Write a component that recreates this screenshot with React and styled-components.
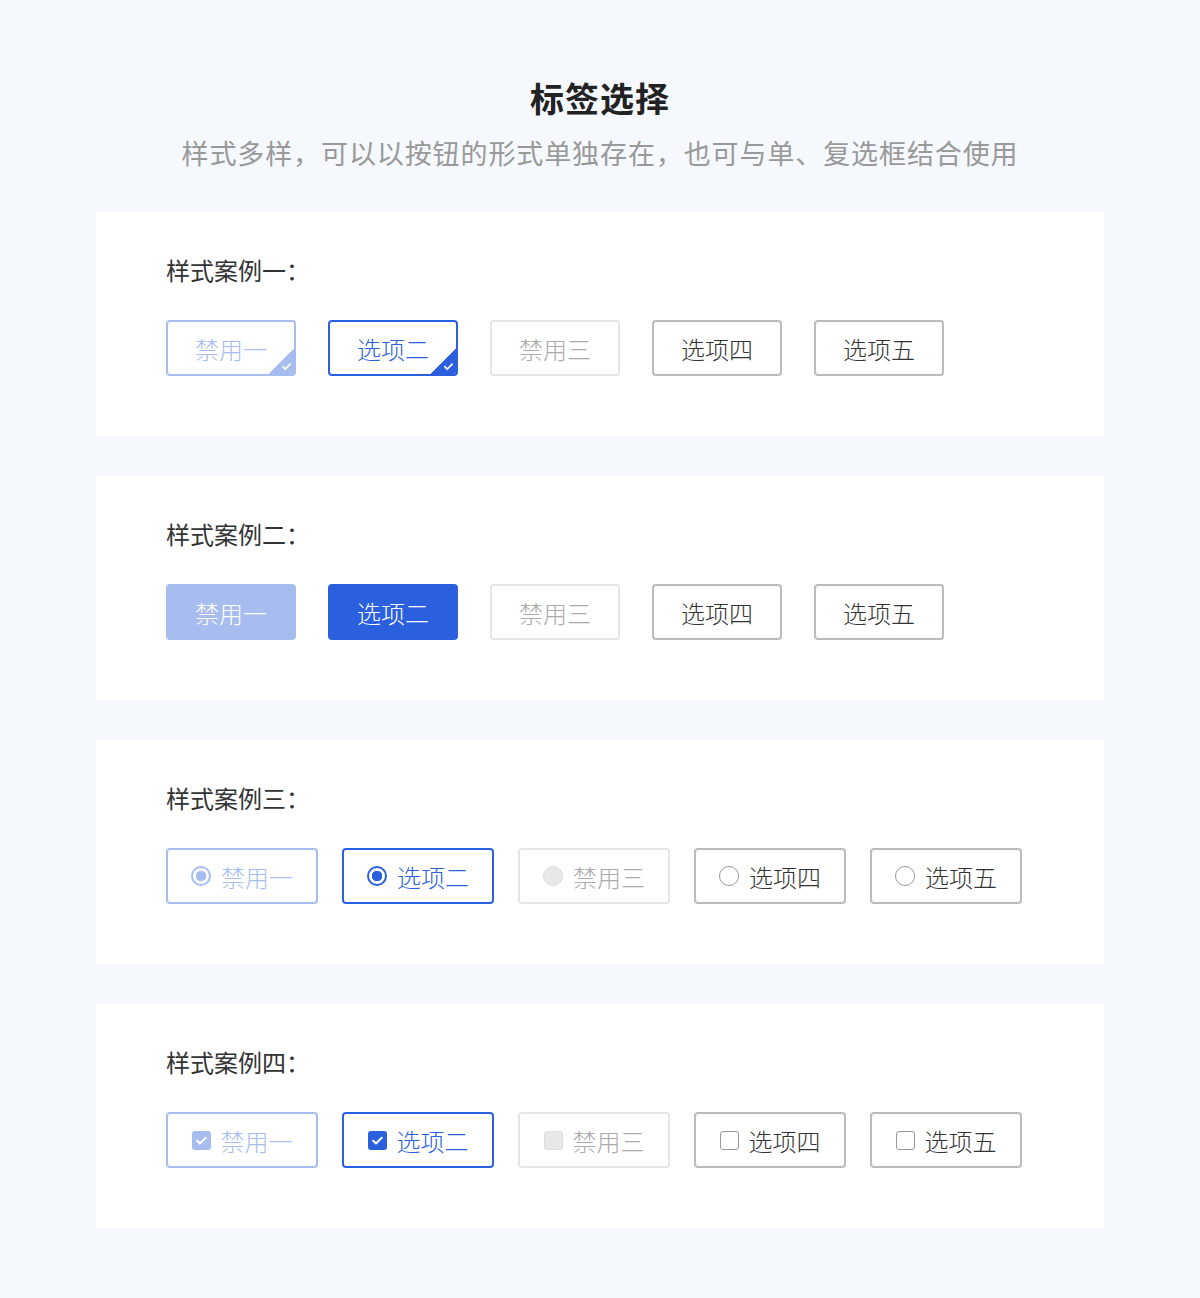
import React from 'react'
import styled, { createGlobalStyle, css } from 'styled-components'

const GlobalStyle = createGlobalStyle`
  body {
    margin: 0;
    background: #f5f8fc;
    font-family: "Noto Sans CJK SC", "Noto Sans", sans-serif;
  }
`

const BLUE = '#2a5fde'
const BLUE_LIGHT = '#a7bdf0'

const Page = styled.div`
  width: 1200px;
  min-height: 1298px;
  box-sizing: border-box;
  padding: 74px 96px 70px;
  display: flex;
  flex-direction: column;
  align-items: center;
`

const Title = styled.h1`
  margin: 0;
  font-size: 34px;
  line-height: 48px;
  font-weight: 700;
  color: #222;
  letter-spacing: 1px;
`

const Subtitle = styled.p`
  margin: 11px 0 39px;
  font-size: 27px;
  line-height: 40px;
  color: #999;
  letter-spacing: 0.9px;
`

const Card = styled.section`
  width: 100%;
  box-sizing: border-box;
  background: #fff;
  padding: 42px 70px 60px;
  margin-bottom: 40px;
`

const Label = styled.div`
  font-size: 24px;
  line-height: 32px;
  color: #333;
  margin-bottom: 34px;
`

const Row = styled.div`
  display: flex;
  gap: ${p => p.$gap}px;
`

const variants = {
  disabledOn: css`
    border-color: ${BLUE_LIGHT};
    color: ${BLUE_LIGHT};
  `,
  on: css`
    border-color: ${BLUE};
    color: ${BLUE};
  `,
  disabled: css`
    border-color: #e6e6e6;
    color: #aaa;
  `,
  off: css`
    border-color: #bbb;
    color: #333;
  `,
}

const filled = {
  disabledOn: css`
    background: ${BLUE_LIGHT};
    border-color: ${BLUE_LIGHT};
    color: #fff;
  `,
  on: css`
    background: ${BLUE};
    border-color: ${BLUE};
    color: #fff;
  `,
}

const Tag = styled.div`
  position: relative;
  overflow: hidden;
  box-sizing: border-box;
  width: ${p => p.$width}px;
  height: 56px;
  border: 2px solid;
  border-radius: 4px;
  display: flex;
  align-items: center;
  justify-content: center;
  gap: 10px;
  font-size: 24px;
  font-weight: 300;
  background: #fff;
  ${p => variants[p.$state]}
  ${p => p.$filled && filled[p.$state]}
`

const Corner = styled.span`
  position: absolute;
  right: -1px;
  bottom: -1px;
  width: 28px;
  height: 28px;
  background: linear-gradient(135deg, transparent 50%, ${p => p.$color} 50%);

  svg {
    position: absolute;
    right: 3px;
    bottom: 3px;
  }
`

const RadioDot = styled.span`
  box-sizing: border-box;
  width: 20px;
  height: 20px;
  border-radius: 50%;
  flex-shrink: 0;
  ${p => p.$state === 'on' && css`border: 2px solid ${BLUE}; background: radial-gradient(circle, ${BLUE} 0 5px, #fff 5.5px);`}
  ${p => p.$state === 'disabledOn' && css`border: 2px solid ${BLUE_LIGHT}; background: radial-gradient(circle, ${BLUE_LIGHT} 0 5px, #fff 5.5px);`}
  ${p => p.$state === 'disabled' && css`border: 1px solid #ddd; background: #e8e8e8;`}
  ${p => p.$state === 'off' && css`border: 1px solid #999; background: #fff;`}
`

const CheckBox = styled.span`
  box-sizing: border-box;
  width: 19px;
  height: 19px;
  border-radius: 3px;
  flex-shrink: 0;
  display: flex;
  align-items: center;
  justify-content: center;
  ${p => p.$state === 'on' && css`background: ${BLUE};`}
  ${p => p.$state === 'disabledOn' && css`background: ${BLUE_LIGHT};`}
  ${p => p.$state === 'disabled' && css`border: 1px solid #ddd; background: #e8e8e8;`}
  ${p => p.$state === 'off' && css`border: 1px solid #999; background: #fff;`}
`

const Tick = ({ size = 12 }) => (
  <svg width={size} height={size} viewBox="0 0 12 12" fill="none">
    <path d="M2 6.2l2.6 2.6L10 3.4" stroke="#fff" strokeWidth="1.8" strokeLinecap="round" strokeLinejoin="round" />
  </svg>
)

const options = [
  { text: '禁用一', state: 'disabledOn' },
  { text: '选项二', state: 'on' },
  { text: '禁用三', state: 'disabled' },
  { text: '选项四', state: 'off' },
  { text: '选项五', state: 'off' },
]

const cornerColor = { disabledOn: BLUE_LIGHT, on: BLUE }

const App = () => (
  <>
    <GlobalStyle />
    <Page>
      <Title>标签选择</Title>
      <Subtitle>样式多样，可以以按钮的形式单独存在，也可与单、复选框结合使用</Subtitle>

      <Card>
        <Label>样式案例一：</Label>
        <Row $gap={32}>
          {options.map(o => (
            <Tag key={o.text} $width={130} $state={o.state}>
              {o.text}
              {cornerColor[o.state] && (
                <Corner $color={cornerColor[o.state]}><Tick size={11} /></Corner>
              )}
            </Tag>
          ))}
        </Row>
      </Card>

      <Card>
        <Label>样式案例二：</Label>
        <Row $gap={32}>
          {options.map(o => (
            <Tag key={o.text} $width={130} $state={o.state} $filled>
              {o.text}
            </Tag>
          ))}
        </Row>
      </Card>

      <Card>
        <Label>样式案例三：</Label>
        <Row $gap={24}>
          {options.map(o => (
            <Tag key={o.text} $width={152} $state={o.state}>
              <RadioDot $state={o.state} />
              {o.text}
            </Tag>
          ))}
        </Row>
      </Card>

      <Card>
        <Label>样式案例四：</Label>
        <Row $gap={24}>
          {options.map(o => (
            <Tag key={o.text} $width={152} $state={o.state}>
              <CheckBox $state={o.state}>
                {(o.state === 'on' || o.state === 'disabledOn') && <Tick size={13} />}
              </CheckBox>
              {o.text}
            </Tag>
          ))}
        </Row>
      </Card>
    </Page>
  </>
)

export default App
